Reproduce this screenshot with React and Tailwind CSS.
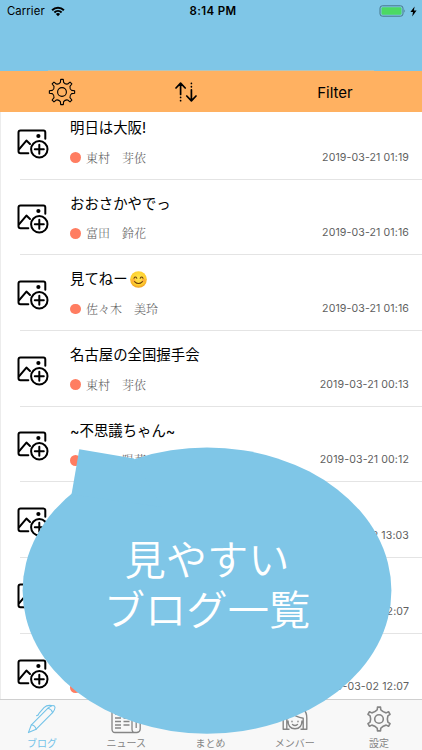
import React from 'react';

const posts = [
    { title: '明日は大阪!', name: '東村　芽依', date: '2019-03-21 01:19' },
    { title: 'おおさかやでっ', name: '富田　鈴花', date: '2019-03-21 01:16' },
    { title: '見てねー', smile: true, name: '佐々木　美玲', date: '2019-03-21 01:16' },
    { title: '名古屋の全国握手会', name: '東村　芽依', date: '2019-03-21 00:13' },
    { title: '~不思議ちゃん~', name: '河田　陽菜', date: '2019-03-21 00:12' },
    { title: '', name: '', date: '2019-03-02 13:03' },
    { title: '', name: '', date: '2019-03-02 12:07' },
    { title: '', name: '', date: '2019-03-02 12:07' },
];

// Outline of a gear around 0,0 with rounded valleys between the teeth
const gearPath = (teeth, outer, inner, top, base) => {
    const step = (Math.PI * 2) / teeth;
    const at = (a, r) => `${(Math.cos(a) * r).toFixed(2)} ${(Math.sin(a) * r).toFixed(2)}`;
    let d = '';
    for (let i = 0; i < teeth; i++) {
        const mid = i * step - Math.PI / 2;
        d += `${i === 0 ? 'M' : 'L'}${at(mid - base * step, inner)}`;
        d += `L${at(mid - top * step, outer)}L${at(mid + top * step, outer)}L${at(mid + base * step, inner)}`;
        d += `Q${at(mid + step / 2, inner - 1.6)} ${at(mid + (1 - base) * step, inner)}`;
    }
    return `${d}Z`;
};

const Gear = ({ teeth, outer, inner, top, base, hole, stroke, className }) => (
    <svg viewBox="-14 -14 28 28" className={className} fill="none" stroke="currentColor" strokeWidth={stroke} strokeLinejoin="round">
        <path d={gearPath(teeth, outer, inner, top, base)} />
        <circle r={hole} />
    </svg>
);

const PictureIcon = () => (
    <svg viewBox="0 0 32 30" className="h-[30px] w-8" fill="none" stroke="#000" strokeWidth="2" strokeLinecap="round" strokeLinejoin="round">
        <path d="M11.3 24.2H3.5Q1.5 24.2 1.5 22.2V3.5Q1.5 1.5 3.5 1.5H26.5Q28.3 1.5 28.3 3.5V9.7" />
        <path d="M2.2 20.2 9.4 11.6 13 15" />
        <circle cx="21.4" cy="7" r="2.1" fill="#000" stroke="none" />
        <circle cx="22.3" cy="20.3" r="8.2" />
        <path d="M22.3 15.8V24.8M17.8 20.3H26.8" />
    </svg>
);

const SmileIcon = () => (
    <svg viewBox="0 0 18 18" className="h-[17px] w-[17px]">
        <defs>
            <radialGradient id="face" cx="50%" cy="40%" r="60%">
                <stop offset="0" stopColor="#ffe64f" />
                <stop offset="0.7" stopColor="#ffd02f" />
                <stop offset="1" stopColor="#ee9b20" />
            </radialGradient>
        </defs>
        <circle cx="9" cy="9" r="8.8" fill="url(#face)" />
        <circle cx="3.6" cy="10" r="2" fill="#ff9a3c" opacity=".6" />
        <circle cx="14.4" cy="10" r="2" fill="#ff9a3c" opacity=".6" />
        <path d="M4.2 7.6Q5.7 5 7.2 7.6M10.8 7.6Q12.3 5 13.8 7.6M4.8 11.2Q9 15.4 13.2 11.2" fill="none" stroke="#6b3b0c" strokeWidth="1.1" strokeLinecap="round" />
    </svg>
);

const StatusBar = () => (
    <div className="grid h-[22px] grid-cols-3 items-center pl-[7px] pr-[5px] text-black">
        <div className="flex items-center gap-[6px]">
            <span className="text-[11.3px] tracking-[0.1px]">Carrier</span>
            <svg viewBox="0 0 14 11" className="h-[11px] w-[14px]">
                <path d="M.4 3.5A9.4 9.4 0 0 1 13.6 3.5L12.2 5A7.4 7.4 0 0 0 1.8 5Z" />
                <path d="M2.7 5.8A6.2 6.2 0 0 1 11.3 5.8L9.9 7.2A4.2 4.2 0 0 0 4.1 7.2Z" />
                <path d="M4.9 8.1A3 3 0 0 1 9.1 8.1L7 10.3Z" />
            </svg>
        </div>
        <span className="pt-[2px] pl-[2px] text-center text-[11.5px] font-semibold tracking-[0.35px]">8:14 PM</span>
        <div className="flex items-center justify-end gap-[4px]">
            <svg viewBox="0 0 27 12" className="h-3 w-[27px]">
                <rect x="1" y=".8" width="23" height="10.4" rx="2.4" fill="none" stroke="#47788a" />
                <rect x="2.5" y="2.3" width="20" height="7.4" rx="1.2" fill="#4cd964" />
                <path d="M25.3 4.2Q26.8 6 25.3 7.8Z" fill="#47788a" />
            </svg>
            <svg viewBox="0 0 7 11" className="h-[11px] w-[7px]">
                <path d="M4.6 .5 .4 6.1H3L2.2 10.5 6.6 4.5H3.9Z" />
            </svg>
        </div>
    </div>
);

const Toolbar = () => (
    <div className="flex h-[41px] shrink-0 items-center bg-[#ffb161]">
        <div className="flex w-[124px] justify-center">
            <Gear className="h-7 w-7" teeth={8} outer={12.7} inner={9.8} top={0.13} base={0.21} hole={4.4} stroke={1.1} />
        </div>
        <div className="flex w-[124px] justify-center">
            <svg viewBox="0 0 24 20" className="h-5 w-6" fill="none" stroke="#000" strokeWidth="1.7" strokeLinecap="round" strokeLinejoin="round">
                <path d="M6.6 12.5V1.5M2 6 6.6 1.2 11.2 6M17.4 7.8V18.5M12.8 14 17.4 18.8 22 14" />
                <path d="M6.6 15.3V15.4M6.6 18.6V18.7M17.4 1.4V1.5M17.4 4.7V4.8" />
            </svg>
        </div>
        <span className="w-[174px] pt-[3px] text-center text-[15px]">Filter</span>
    </div>
);

const PostRow = ({ post }) => (
    <li className="flex h-[75.7px] pl-[17px]">
        <div className="w-[53px] pt-[24.7px]">
            <PictureIcon />
        </div>
        <div className="flex-1 pt-[13px]">
            <p className="flex h-[22px] items-center gap-[2px] text-[14.4px] leading-[22px] text-black">
                {post.title}
                {post.smile && <SmileIcon />}
            </p>
            <div className="mt-[7.6px] flex h-[22px] items-center pr-[13px]">
                <span className="h-[10.5px] w-[10.5px] rounded-full bg-[#ff7d61]" />
                <span className="ml-[5.5px] flex-1 font-['Noto_Serif_CJK_JP','Liberation_Serif','Noto_Sans_CJK_JP',serif] text-[12px] font-light text-[#606060]">
                    {post.name}
                </span>
                <span className="text-[10.6px] tracking-[0.1px] text-[#606060]">{post.date}</span>
            </div>
        </div>
    </li>
);

const PenIcon = () => (
    <svg viewBox="0 0 30 30" className="h-[30px] w-[30px]" fill="none" stroke="currentColor" strokeWidth="1.1" strokeLinecap="round" strokeLinejoin="round">
        <path d="M1.4 28.6 4.4 20.8 21 4.2Q25.4.2 27.4 2 29.2 4 25.6 8.6L9.2 25.2Z" />
        <path d="M4.4 20.8Q8 21.4 9.2 25.2M21 4.2Q24.6 5 25.6 8.6M24.6 1.6Q20 .8 17 3.6L12 9.4Q11.4 11.8 9.6 11.6" />
    </svg>
);

const NewsIcon = () => (
    <svg viewBox="0 0 30 30" className="h-[30px] w-[30px]" fill="none" stroke="currentColor" strokeWidth="1.3" strokeLinejoin="round">
        <path d="M21 25V2H1V25Q1 28.5 4 28.5H26Q29.2 28 29.2 25V14Q29 10 25.2 10 21 10 21 14V25Q21 28.5 24 28.5M25.2 10V24" />
        <path d="M4 6H18M4 10H10M12.5 10H18.5M4 14H10M12.5 14H18.5M4 17.5H10M12.5 17.5H18.5M4 21H10M12.5 21H18.5M4 24H10" />
    </svg>
);

const MatomeIcon = () => (
    <svg viewBox="0 0 30 30" className="h-[30px] w-[30px]" fill="none" stroke="currentColor" strokeWidth="1.3">
        <path d="M4 6H26M4 13H26M4 20H26" />
    </svg>
);

const MemberIcon = () => (
    <svg viewBox="0 0 28 30" className="h-[30px] w-7" fill="none" stroke="currentColor" strokeWidth="1.4" strokeLinejoin="round">
        <path d="M8.5 25.2H2.2V14Q2.2 3 14 3 25.8 3 25.8 14V25.2H19.5" />
        <path d="M5.8 25V15Q8.5 13.4 9.8 8.5 14.5 13 22.2 14.2V25M7 16.5Q7 24.8 14 24.8 21 24.8 21 16.5" />
        <path d="M11 17.2V17.8M17 17.2V17.8M11.5 20.5Q14 22.5 16.5 20.5" strokeLinecap="round" />
    </svg>
);

const tabs = [
    { label: 'ブログ', icon: <PenIcon />, active: true },
    { label: 'ニュース', icon: <NewsIcon /> },
    { label: 'まとめ', icon: <MatomeIcon /> },
    { label: 'メンバー', icon: <MemberIcon /> },
    { label: '設定', icon: <Gear className="h-7 w-7" teeth={6} outer={12} inner={9.4} top={0.12} base={0.18} hole={4.3} stroke={1.6} /> },
];

const TabBar = () => (
    <nav className="grid h-[51px] shrink-0 grid-cols-5 border-t border-[#cfcfcf] bg-[#f8f8f8] pr-[1px]">
        {tabs.map(tab => (
            <div key={tab.label} className={`flex flex-col items-center pt-[4px] ${tab.active ? 'text-[#73c3e8]' : 'text-[#858585]'}`}>
                <div className="flex h-[30px] items-center">{tab.icon}</div>
                <span className="mt-[2px] text-[10px] leading-[14px]">{tab.label}</span>
            </div>
        ))}
    </nav>
);

// Speech balloon lying over the list
const Balloon = () => (
    <div className="absolute left-[22px] top-[447px] h-[287px] w-[370px]">
        <svg viewBox="0 0 370 287" className="absolute inset-0 h-full w-full" fill="#7fc6e7">
            <ellipse cx="185" cy="143.6" rx="184.4" ry="143.1" />
            <path d="M57.3 2.2 112 11.6 140 60 49.5 47.5Z" />
        </svg>
        <p className="relative pt-[88px] text-center text-[41.3px] font-[350] leading-[50px] text-white">
            見やすい
            <br />
            ブログ一覧
        </p>
    </div>
);

const App = () => {
    return (
        <div className="relative flex h-[750px] w-[422px] flex-col overflow-hidden bg-white font-['Inter','Noto_Sans_CJK_JP',sans-serif]">
            <header className="flex h-[71px] shrink-0 flex-col justify-between bg-[#7fc6e7]">
                <StatusBar />
                <div className="ml-[48px] h-px w-[326px] bg-[#b4c6bd]" />
            </header>
            <Toolbar />
            <main className="min-h-0 flex-1 overflow-hidden border-l border-[#ececec]">
                <ul className="-mt-[8px] -ml-px">
                    {posts.map((post, i) => (
                        <React.Fragment key={i}>
                            {i > 0 && <li className="-mt-px ml-[20px] h-px bg-[#e4e4e4]" />}
                            <PostRow post={post} />
                        </React.Fragment>
                    ))}
                </ul>
            </main>
            <TabBar />
            <Balloon />
        </div>
    );
};

export default App;
